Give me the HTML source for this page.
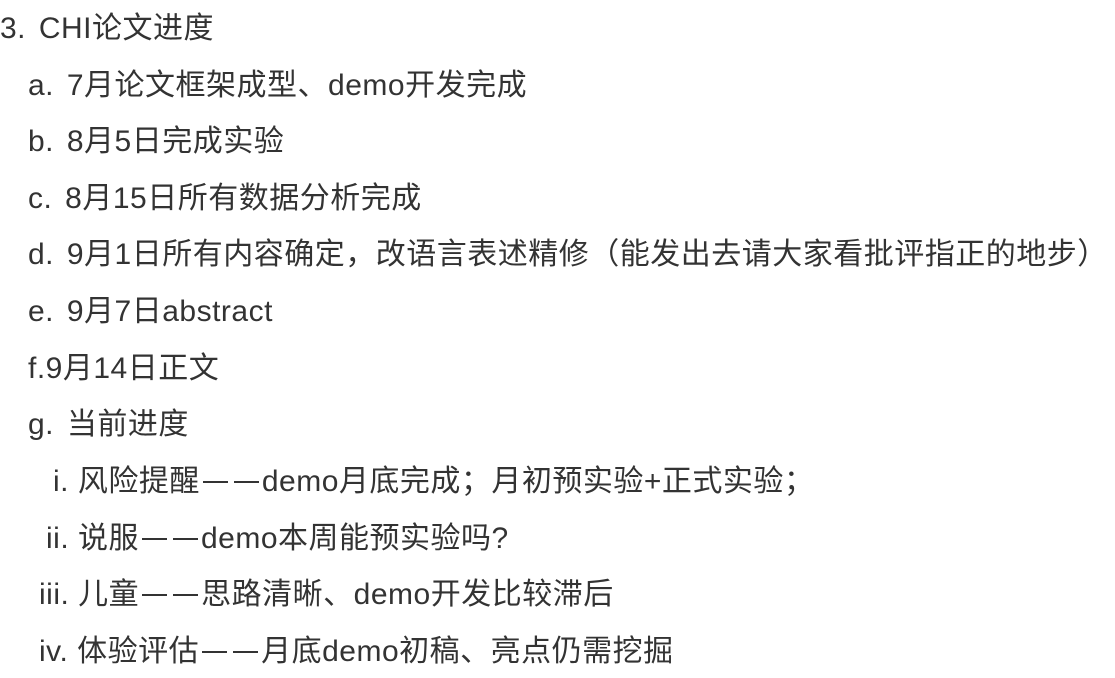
<!DOCTYPE html>
<html><head><meta charset="utf-8"><style>
html,body{margin:0;padding:0;background:#fff;width:1115px;height:678px;overflow:hidden}
div{position:absolute;white-space:nowrap;font-family:"Liberation Sans","Noto Sans CJK SC",sans-serif;font-size:30px;line-height:30px;color:#333;letter-spacing:0.5px;word-spacing:4px}
.s{word-spacing:0}
.d{display:inline-block;width:25px;height:2px;background:#333;margin:0 3px;vertical-align:middle;position:relative;top:-1px}
</style></head><body>
<div style="left:0;top:14px">3. CHI论文进度</div>
<div style="left:28px;top:71px">a. 7月论文框架成型、demo开发完成</div>
<div style="left:28px;top:127px">b. 8月5日完成实验</div>
<div style="left:28px;top:184px">c. 8月15日所有数据分析完成</div>
<div style="left:28px;top:240px">d. 9月1日所有内容确定，改语言表述精修（能发出去请大家看批评指正的地步）</div>
<div style="left:28px;top:297px">e. 9月7日abstract</div>
<div style="left:28px;top:354px">f.9月14日正文</div>
<div style="left:28px;top:410px">g. 当前进度</div>
<div class="s" style="left:53px;top:467px">i. 风险提醒<span class="d"></span><span class="d"></span>demo月底完成；月初预实验+正式实验；</div>
<div class="s" style="left:46px;top:524px">ii. 说服<span class="d"></span><span class="d"></span>demo本周能预实验吗?</div>
<div class="s" style="left:39px;top:580px">iii. 儿童<span class="d"></span><span class="d"></span>思路清晰、demo开发比较滞后</div>
<div class="s" style="left:39px;top:637px">iv. 体验评估<span class="d"></span><span class="d"></span>月底demo初稿、亮点仍需挖掘</div>
</body></html>
